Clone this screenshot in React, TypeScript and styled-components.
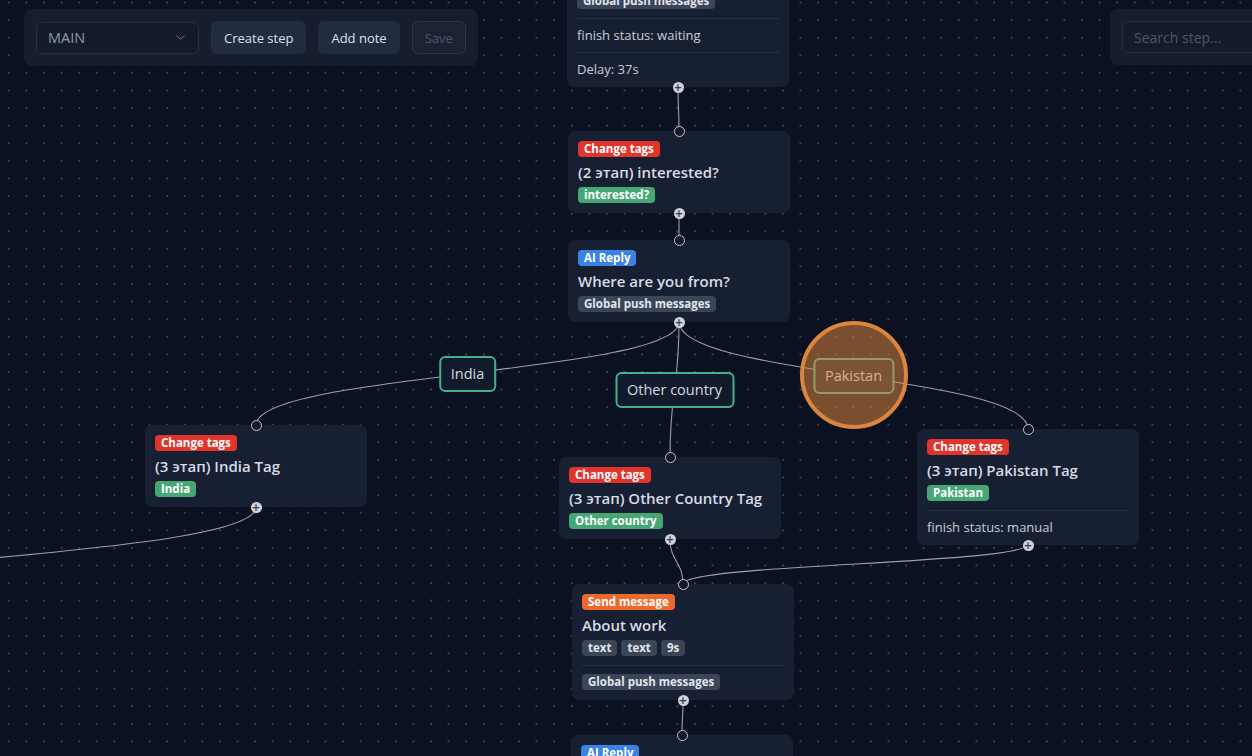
import React from "react";
import styled, { createGlobalStyle } from "styled-components";
import { ChevronDown } from "lucide-react";

const Global = createGlobalStyle`
  html, body { margin: 0; padding: 0; background: #0b1121; overflow: hidden; }
  * { box-sizing: border-box; }
`;

const FONT = `"Open Sans", "Noto Sans", "Liberation Sans", sans-serif`;

const Canvas = styled.div`
  position: relative;
  width: 1252px;
  height: 756px;
  overflow: hidden;
  background-color: #0b1121;
  background-image: radial-gradient(circle, #364155 0.9px, transparent 1.2px);
  background-size: 17.6px 17.6px;
  background-position: 0px -6.3px;
  font-family: ${FONT};
`;

const EdgeLayer = styled.svg`
  position: absolute;
  inset: 0;
  width: 100%;
  height: 100%;
  pointer-events: none;
`;

const NodeBox = styled.div<{ $x: number; $y: number }>`
  position: absolute;
  left: ${(p) => p.$x}px;
  top: ${(p) => p.$y}px;
  width: 222px;
  padding: 10px 10px 10px;
  background: #172033;
  border-radius: 7px;
  display: flex;
  flex-direction: column;
  align-items: flex-start;
`;

const badgeColors: Record<string, string> = {
  red: "#e3342b",
  blue: "#3a83e3",
  orange: "#ec6a2c",
  green: "#45a874",
  gray: "#3b4558",
};

const Badge = styled.span<{ $tone: string }>`
  display: inline-flex;
  align-items: center;
  height: 16px;
  padding: 0 6px;
  border-radius: 4px;
  background: ${(p) => badgeColors[p.$tone]};
  color: ${(p) => (p.$tone === "gray" ? "#e1e5ec" : "#ffffff")};
  font-size: 11.5px;
  font-weight: 700;
  line-height: 16px;
  white-space: nowrap;
`;

const Title = styled.div`
  margin-top: 5px;
  height: 20px;
  line-height: 20px;
  font-size: 15px;
  font-weight: 600;
  color: #d7dbe3;
  white-space: nowrap;
`;

const TagRow = styled.div`
  margin-top: 5px;
  display: flex;
  gap: 4px;
`;

const Section = styled.div`
  align-self: stretch;
  margin-top: 9px;
  padding-top: 8px;
  border-top: 1px solid #263046;
  display: flex;
  min-height: 25px;
`;

const SectionText = styled.span`
  font-size: 13px;
  line-height: 16px;
  color: #c8cdd6;
`;

const TargetHandle = styled.div`
  position: absolute;
  left: 50%;
  top: -5px;
  width: 11px;
  height: 11px;
  margin-left: -5.5px;
  border-radius: 50%;
  background: #111827;
  border: 1.2px solid #c3c8d1;
`;

const SourceHandle = styled.div`
  position: absolute;
  left: 50%;
  bottom: -6px;
  width: 11px;
  height: 11px;
  margin-left: -5.5px;
  border-radius: 50%;
  background: #cdd1d8;
  display: flex;
  align-items: center;
  justify-content: center;
  color: #374151;
  font-size: 10px;
  font-weight: 700;
  line-height: 1;
  font-family: "DejaVu Sans", sans-serif;
`;

const EdgeLabel = styled.div<{ $x: number; $y: number }>`
  position: absolute;
  left: ${(p) => p.$x}px;
  top: ${(p) => p.$y}px;
  transform: translate(-50%, -50%);
  height: 36px;
  padding: 0 10px;
  border: 2px solid #46b088;
  border-radius: 6px;
  background: #121b2b;
  color: #d4d9e1;
  font-size: 14.5px;
  line-height: 32px;
  white-space: nowrap;
`;

const Highlight = styled.div<{ $x: number; $y: number }>`
  position: absolute;
  left: ${(p) => p.$x}px;
  top: ${(p) => p.$y}px;
  width: 108px;
  height: 108px;
  transform: translate(-50%, -50%);
  border-radius: 50%;
  border: 4px solid #db853e;
  background: rgba(222, 136, 62, 0.52);
  pointer-events: none;
`;

const Panel = styled.div<{ $x: number }>`
  position: absolute;
  top: 9px;
  left: ${(p) => p.$x}px;
  padding: 12px;
  background: #151d2e;
  border-radius: 8px;
  display: flex;
  align-items: center;
  gap: 12px;
`;

const Select = styled.div`
  width: 163px;
  height: 32px;
  padding: 0 10px 0 11px;
  border: 1px solid #263044;
  border-radius: 6px;
  background: #131b2a;
  display: flex;
  align-items: center;
  justify-content: space-between;
  color: #8e97a7;
  font-size: 14.5px;
`;

const Button = styled.button<{ $disabled?: boolean }>`
  height: 33px;
  padding: 0 12px;
  border-radius: 6px;
  border: 1px solid ${(p) => (p.$disabled ? "#2c3546" : "transparent")};
  background: ${(p) => (p.$disabled ? "#1a2233" : "#212c41")};
  color: ${(p) => (p.$disabled ? "#4f5869" : "#dde1e8")};
  font-family: ${FONT};
  font-size: 13px;
`;

const SearchInput = styled.div`
  width: 200px;
  height: 32px;
  padding: 0 11px;
  border: 1px solid #242e42;
  border-radius: 6px;
  background: #141c2c;
  color: #4d5668;
  font-size: 14px;
  display: flex;
  align-items: center;
`;

type Tag = { text: string; tone: string };
type NodeData = {
  id: string;
  x: number;
  y: number;
  h: number;
  badge: Tag;
  title: string;
  tags: Tag[];
  sections?: ({ kind: "text"; text: string } | { kind: "badge"; tag: Tag })[];
};

const nodes: NodeData[] = [
  {
    id: "n1",
    x: 567,
    y: -97,
    h: 185,
    badge: { text: "Send message", tone: "orange" },
    title: "Hello",
    tags: [{ text: "text", tone: "gray" }],
    sections: [
      { kind: "badge", tag: { text: "Global push messages", tone: "gray" } },
      { kind: "text", text: "finish status: waiting" },
      { kind: "text", text: "Delay: 37s" },
    ],
  },
  {
    id: "n2",
    x: 568,
    y: 131,
    h: 82,
    badge: { text: "Change tags", tone: "red" },
    title: "(2 этап) interested?",
    tags: [{ text: "interested?", tone: "green" }],
  },
  {
    id: "n3",
    x: 568,
    y: 240,
    h: 82,
    badge: { text: "AI Reply", tone: "blue" },
    title: "Where are you from?",
    tags: [{ text: "Global push messages", tone: "gray" }],
  },
  {
    id: "n4",
    x: 145,
    y: 425,
    h: 82,
    badge: { text: "Change tags", tone: "red" },
    title: "(3 этап) India Tag",
    tags: [{ text: "India", tone: "green" }],
  },
  {
    id: "n5",
    x: 559,
    y: 457,
    h: 82,
    badge: { text: "Change tags", tone: "red" },
    title: "(3 этап) Other Country Tag",
    tags: [{ text: "Other country", tone: "green" }],
  },
  {
    id: "n6",
    x: 917,
    y: 429,
    h: 115,
    badge: { text: "Change tags", tone: "red" },
    title: "(3 этап) Pakistan Tag",
    tags: [{ text: "Pakistan", tone: "green" }],
    sections: [{ kind: "text", text: "finish status: manual" }],
  },
  {
    id: "n7",
    x: 572,
    y: 584,
    h: 116,
    badge: { text: "Send message", tone: "orange" },
    title: "About work",
    tags: [
      { text: "text", tone: "gray" },
      { text: "text", tone: "gray" },
      { text: "9s", tone: "gray" },
    ],
    sections: [{ kind: "badge", tag: { text: "Global push messages", tone: "gray" } }],
  },
  {
    id: "n8",
    x: 571,
    y: 735,
    h: 82,
    badge: { text: "AI Reply", tone: "blue" },
    title: "What do you do?",
    tags: [{ text: "Global push messages", tone: "gray" }],
  },
];

const byId = Object.fromEntries(nodes.map((n) => [n.id, n]));

type Pt = [number, number];
const src = (id: string): Pt => [byId[id].x + 111, byId[id].y + byId[id].h];
const tgt = (id: string): Pt => [byId[id].x + 111, byId[id].y];

const bezier = (s: Pt, t: Pt) => {
  const off = Math.abs(t[1] - s[1]) * 0.5;
  return `M${s[0]},${s[1]} C${s[0]},${s[1] + off} ${t[0]},${t[1] - off} ${t[0]},${t[1]}`;
};
const mid = (s: Pt, t: Pt): Pt => [(s[0] + t[0]) / 2, (s[1] + t[1]) / 2];

const edges: { s: Pt; t: Pt; label?: string; highlight?: boolean }[] = [
  { s: src("n1"), t: tgt("n2") },
  { s: src("n2"), t: tgt("n3") },
  { s: src("n3"), t: tgt("n4"), label: "India" },
  { s: src("n3"), t: tgt("n5"), label: "Other country" },
  { s: src("n3"), t: tgt("n6"), label: "Pakistan", highlight: true },
  { s: src("n4"), t: [-300, 612] },
  { s: src("n5"), t: tgt("n7") },
  { s: src("n6"), t: tgt("n7") },
  { s: src("n7"), t: tgt("n8") },
];

function FlowNode({ n }: { n: NodeData }) {
  return (
    <NodeBox $x={n.x} $y={n.y}>
      <TargetHandle />
      <Badge $tone={n.badge.tone}>{n.badge.text}</Badge>
      <Title>{n.title}</Title>
      <TagRow>
        {n.tags.map((t, i) => (
          <Badge key={i} $tone={t.tone}>
            {t.text}
          </Badge>
        ))}
      </TagRow>
      {n.sections?.map((s, i) => (
        <Section key={i}>
          {s.kind === "text" ? (
            <SectionText>{s.text}</SectionText>
          ) : (
            <Badge $tone={s.tag.tone}>{s.tag.text}</Badge>
          )}
        </Section>
      ))}
      <SourceHandle>+</SourceHandle>
    </NodeBox>
  );
}

export default function App() {
  return (
    <>
      <Global />
      <Canvas>
        <EdgeLayer>
          {edges.map((e, i) => (
            <path key={i} d={bezier(e.s, e.t)} fill="none" stroke="#9aa0aa" strokeWidth={1.1} />
          ))}
        </EdgeLayer>
        {edges
          .filter((e) => e.label)
          .map((e, i) => {
            const [mx, my] = mid(e.s, e.t);
            return (
              <React.Fragment key={i}>
                <EdgeLabel $x={mx} $y={my}>
                  {e.label}
                </EdgeLabel>
                {e.highlight && <Highlight $x={mx} $y={my - 1} />}
              </React.Fragment>
            );
          })}
        {nodes.map((n) => (
          <FlowNode key={n.id} n={n} />
        ))}
        <Panel $x={24}>
          <Select>
            <span>MAIN</span>
            <ChevronDown size={15} color="#6c7587" strokeWidth={1.5} />
          </Select>
          <Button>Create step</Button>
          <Button>Add note</Button>
          <Button $disabled>Save</Button>
        </Panel>
        <Panel $x={1110}>
          <SearchInput>Search step...</SearchInput>
        </Panel>
      </Canvas>
    </>
  );
}
